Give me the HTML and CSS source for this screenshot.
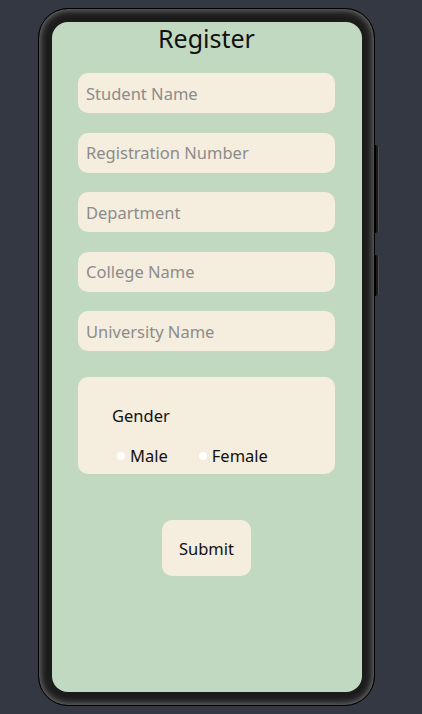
FILE: index.html
```html
<!DOCTYPE html>
<html lang="en">
<head>
    <meta charset="UTF-8">
    <meta name="viewport" content="width=device-width, initial-scale=1.0">
    <title>Register</title>
    <link rel="stylesheet" href="styles.css">
</head>
<body>
    <div class="phone">
        <span class="side-btn power"></span>
        <span class="side-btn volume"></span>
        <div class="screen">
            <h1 class="title">Register</h1>

            <form class="register-form">
                <input type="text" class="field" placeholder="Student Name">
                <input type="text" class="field" placeholder="Registration Number">
                <input type="text" class="field" placeholder="Department">
                <input type="text" class="field" placeholder="College Name">
                <input type="text" class="field" placeholder="University Name">

                <div class="gender-box">
                    <p class="gender-label">Gender</p>
                    <div class="radio-row">
                        <label class="radio"><span class="dot"></span>Male</label>
                        <label class="radio"><span class="dot"></span>Female</label>
                    </div>
                </div>

                <button type="button" class="btn">Submit</button>
            </form>
        </div>
    </div>
</body>
</html>
```

FILE: styles.css
```css
:root {
    --bg: #333842;
    --screen: #c1d9c1;
    --card: #f5eddd;
    --text: #111111;
    --muted: #8c8c8c;
}

* {
    margin: 0;
    padding: 0;
    box-sizing: border-box;
    font-family: 'Noto Sans', 'Open Sans', sans-serif;
}

body {
    background-color: var(--bg);
    width: 422px;
    height: 714px;
    overflow: hidden;
}

.phone {
    position: relative;
    width: 337px;
    height: 698px;
    margin: 8px 0 0 38px;
    padding: 13px 12px 13px 13px;
    background-color: #1c1c1c;
    border: 1px solid #000;
    border-radius: 30px;
    box-shadow: inset 0 0 7px 1px #7a7a7a;
}

.side-btn {
    position: absolute;
    right: -5px;
    width: 4px;
    background-color: #1a1a1a;
    border-left: 1px solid #000;
    border-radius: 0 2px 2px 0;
    box-shadow: inset -1px 0 0 #4a4a4a;
}

.side-btn.power {
    top: 136px;
    height: 88px;
}

.side-btn.volume {
    top: 246px;
    height: 41px;
}

.screen {
    width: 100%;
    height: 100%;
    background-color: var(--screen);
    border-radius: 16px;
    padding: 0 27px 0 26px;
    display: flex;
    flex-direction: column;
}

.title {
    font-size: 25px;
    font-weight: 400;
    line-height: 32px;
    text-align: center;
    color: var(--text);
    margin-bottom: 19px;
}

.register-form {
    display: flex;
    flex-direction: column;
    gap: 19.5px;
}

.field {
    height: 40px;
    width: 100%;
    border: none;
    outline: none;
    border-radius: 10px;
    background-color: var(--card);
    padding: 0 8px;
    font-size: 16.5px;
    color: var(--text);
}

.field::placeholder {
    color: var(--muted);
}

.gender-box {
    margin-top: 6.5px;
    height: 97px;
    background-color: var(--card);
    border-radius: 10px;
    padding: 27px 0 0 34px;
}

.gender-label {
    font-size: 16.5px;
    line-height: 24px;
    color: var(--text);
}

.radio-row {
    display: flex;
    gap: 31px;
    margin-top: 16px;
    padding-left: 5px;
}

.radio {
    display: flex;
    align-items: center;
    font-size: 16.5px;
    line-height: 24px;
    color: var(--text);
}

.dot {
    width: 8px;
    height: 8px;
    border-radius: 50%;
    background-color: #fff;
    margin-right: 5px;
}

.btn {
    align-self: center;
    margin-top: 26.5px;
    width: 89px;
    height: 56px;
    border: none;
    border-radius: 10px;
    background-color: var(--card);
    font-size: 16.5px;
    color: var(--text);
    cursor: pointer;
}
```
